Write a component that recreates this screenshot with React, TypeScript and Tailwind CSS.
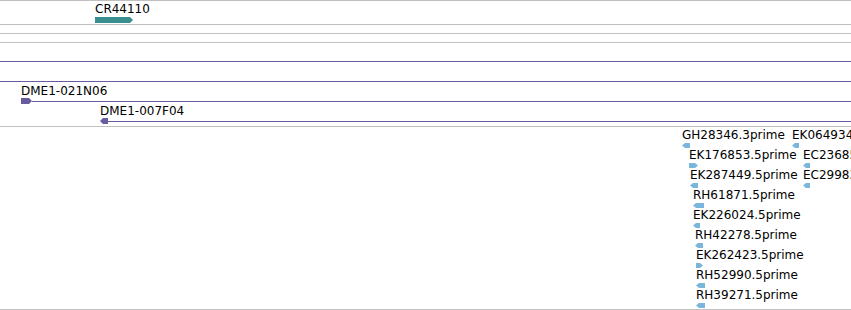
import React from "react";

const teal = "#3a8e8e";
const purple = "#6a5a9e";
const blue = "#7ab5dc";

type Feat = {
  name: string;
  x: number;
  w: number;
  dir: "left" | "right";
};

// EST hits, one array per 20px row
const rows: Feat[][] = [
  [
    { name: "GH28346.3prime", x: 682, w: 8, dir: "left" },
    { name: "EK064934.3prime", x: 792, w: 7, dir: "left" },
  ],
  [
    { name: "EK176853.5prime", x: 689, w: 9, dir: "right" },
    { name: "EC236852.5prime", x: 803, w: 7, dir: "left" },
  ],
  [
    { name: "EK287449.5prime", x: 690, w: 8, dir: "left" },
    { name: "EC299837.5prime", x: 803, w: 7, dir: "left" },
  ],
  [{ name: "RH61871.5prime", x: 693, w: 11, dir: "left" }],
  [{ name: "EK226024.5prime", x: 693, w: 7, dir: "left" }],
  [{ name: "RH42278.5prime", x: 695, w: 8, dir: "left" }],
  [{ name: "EK262423.5prime", x: 696, w: 7, dir: "right" }],
  [{ name: "RH52990.5prime", x: 696, w: 9, dir: "left" }],
  [{ name: "RH39271.5prime", x: 696, w: 9, dir: "left" }],
];

function Arrow({ w, h, dir, color }: { w: number; h: number; dir: string; color: string }) {
  const m = h / 2;
  const t = Math.min(3, w / 2);
  const pts =
    dir === "left"
      ? `0,${m} ${t},0 ${w},0 ${w},${h} ${t},${h}`
      : `0,0 ${w - t},0 ${w},${m} ${w - t},${h} 0,${h}`;
  return (
    <svg width={w} height={h} className="block shrink-0">
      <polygon points={pts} fill={color} />
    </svg>
  );
}

function Hit({ f }: { f: Feat }) {
  return (
    <div className="absolute top-0 flex flex-col gap-px" style={{ left: f.x }}>
      <span className="whitespace-nowrap">{f.name}</span>
      <Arrow w={f.w} h={5} dir={f.dir} color={blue} />
    </div>
  );
}

export default function App() {
  return (
    <div
      className="w-[851px] h-[310px] bg-white overflow-hidden text-[12px] leading-[14px] text-black"
      style={{ fontFamily: '"DejaVu Sans", sans-serif' }}
    >
      {/* gene track */}
      <div className="h-[24px] border-t border-[#c0c0c0] pl-[95px] pt-[1px]">
        <div className="flex flex-col gap-px w-max">
          <span>CR44110</span>
          <Arrow w={38} h={6} dir="right" color={teal} />
        </div>
      </div>
      <div className="h-[9px] border-t border-[#c0c0c0]" />
      <div className="h-[9px] border-t border-[#c0c0c0]" />

      {/* clone track */}
      <div className="h-[84px] border-t border-[#c0c0c0] flex flex-col pt-[18px]">
        <div className="h-px" style={{ background: purple }} />
        <div className="h-px mt-[19px]" style={{ background: purple }} />

        <div className="pl-[21px] mt-[2px]">
          <span className="block">DME1-021N06</span>
          <div className="flex items-center mt-[0px]">
            <Arrow w={11} h={6} dir="right" color={purple} />
            <div className="h-px flex-1" style={{ background: purple }} />
          </div>
        </div>

        <div className="pl-[100px]">
          <span className="block">DME1-007F04</span>
          <div className="flex items-center">
            <Arrow w={8} h={6} dir="left" color={purple} />
            <div className="h-px flex-1" style={{ background: purple }} />
          </div>
        </div>
      </div>

      {/* EST track */}
      <div className="h-[183px] border-t border-[#c0c0c0] flex flex-col pt-[1px]">
        {rows.map((row, i) => (
          <div key={i} className="relative h-[20px] shrink-0">
            {row.map((f) => (
              <Hit key={f.name} f={f} />
            ))}
          </div>
        ))}
      </div>
      <div className="h-px bg-[#c0c0c0]" />
    </div>
  );
}
